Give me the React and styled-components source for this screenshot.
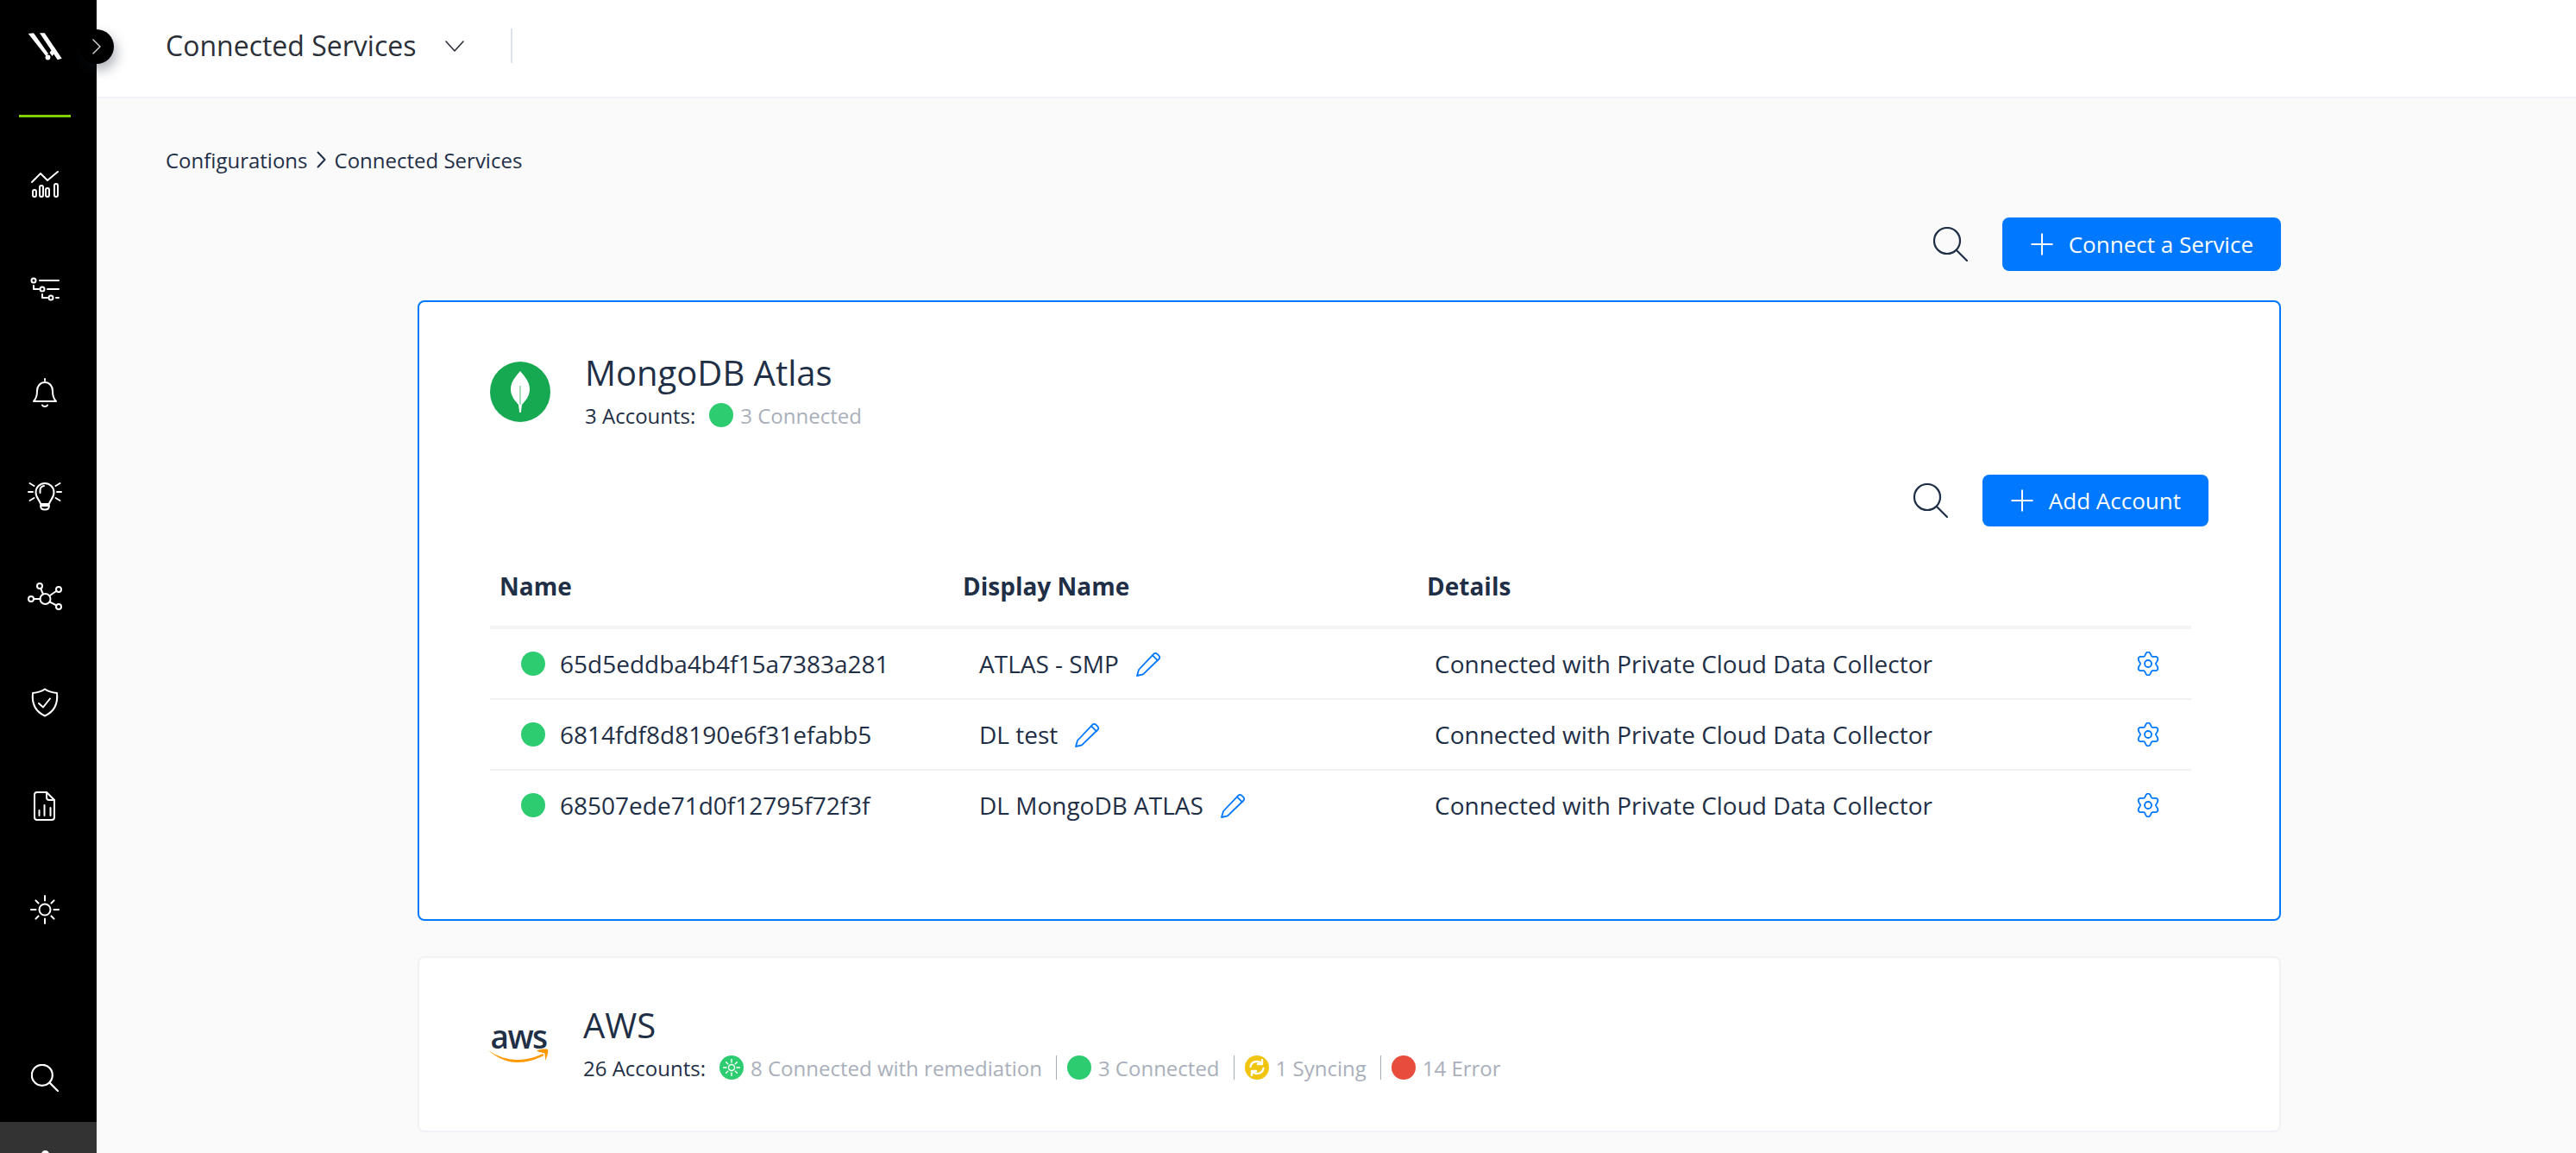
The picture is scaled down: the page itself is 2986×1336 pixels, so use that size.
import React from "react";
import styled, { createGlobalStyle } from "styled-components";

const INK = "#1f2f46";
const MUTED = "#a9afbb";
const BLUE = "#0078ff";

const Global = createGlobalStyle`
  html, body { margin: 0; padding: 0; height: 1336px; overflow: hidden; background: #fafafb; }
  * { box-sizing: border-box; }
  body { font-family: "Open Sans", "Liberation Sans", sans-serif; color: ${INK}; }
`;

const Page = styled.div`
  display: flex;
  width: 2986px;
  height: 1336px;
  overflow: hidden;
`;

const Sidebar = styled.aside`
  position: relative;
  flex: 0 0 112px;
  display: flex;
  flex-direction: column;
  background: #000;
  z-index: 2;
`;

const Brand = styled.div`
  height: 133px;
  padding: 36px 0 0 30px;
`;

const AccentRule = styled.div`
  width: 60px;
  height: 3px;
  margin-left: 22px;
  background: #7ed000;
  flex: none;
`;

const Toggle = styled.button`
  position: absolute;
  left: 92px;
  top: 34px;
  width: 40px;
  height: 40px;
  padding: 0;
  border: 0;
  border-radius: 50%;
  background: #000;
  box-shadow: 3px 7px 14px rgba(20, 30, 50, 0.35);
  display: flex;
  align-items: center;
  justify-content: center;
`;

const NavList = styled.nav`
  display: flex;
  flex-direction: column;
  padding-top: 18px;
`;

const NavItem = styled.div`
  height: 120px;
  padding-right: 8px;
  display: flex;
  align-items: center;
  justify-content: center;
`;

const SideSearch = styled.div`
  margin-top: auto;
  height: 102px;
  padding-right: 8px;
  display: flex;
  align-items: center;
  justify-content: center;
`;

const UserTab = styled.div`
  height: 36px;
  flex: none;
  background: #333;
  display: flex;
  justify-content: center;
  padding: 33px 8px 0 0;
  overflow: hidden;
`;

const UserHead = styled.span`
  width: 9px;
  height: 9px;
  border-radius: 50%;
  background: #fff;
`;

const Main = styled.div`
  flex: 1;
  min-width: 0;
  display: flex;
  flex-direction: column;
`;

const TopBar = styled.header`
  height: 114px;
  flex: none;
  display: flex;
  align-items: flex-start;
  padding: 33px 0 0 80px;
  background: #fff;
  border-bottom: 2px solid #f2f3f7;
`;

const PageTitle = styled.h1`
  margin: 0;
  font-size: 32px;
  line-height: 40px;
  font-weight: 400;
  color: #2a2f38;
`;

const TitleCaret = styled.span`
  display: flex;
  margin: 14px 0 0 34px;
`;

const TopDivider = styled.span`
  width: 2px;
  height: 40px;
  margin-left: 54px;
  background: #dde1e8;
`;

const Content = styled.main`
  flex: 1;
  min-height: 0;
  padding: 54px 342px 0 80px;
`;

const Breadcrumb = styled.div`
  display: flex;
  align-items: center;
  gap: 10px;
  height: 34px;
  font-size: 24px;
  color: ${INK};
`;

const Column = styled.div`
  margin-left: 292px;
`;

const Toolbar = styled.div`
  display: flex;
  justify-content: flex-end;
  align-items: center;
  gap: 40px;
  margin-top: ${(p) => p.$top || 0}px;
`;

const PrimaryButton = styled.button`
  display: flex;
  align-items: center;
  gap: 18px;
  height: ${(p) => p.$h}px;
  padding: 0 32px 0 33px;
  border: 0;
  border-radius: 8px;
  background: ${BLUE};
  color: #fff;
  font: 400 26px "Open Sans", sans-serif;
`;

const Card = styled.section`
  margin-top: ${(p) => p.$top}px;
  background: #fff;
  border: 2px solid ${(p) => (p.$active ? BLUE : "#f1f2f6")};
  border-radius: 8px;
  padding: ${(p) => (p.$active ? "55px 82px 92px 82px" : "51px 82px 0 80px")};
  height: ${(p) => (p.$active ? "auto" : "204px")};
`;

const ServiceHead = styled.div`
  display: flex;
  align-items: flex-start;
  gap: ${(p) => p.$gap}px;
`;

const MongoMark = styled.div`
  width: 70px;
  height: 70px;
  margin-top: 14px;
  border-radius: 50%;
  background: #17a951;
  display: flex;
  align-items: center;
  justify-content: center;
  flex: none;
`;

const AwsMark = styled.div`
  width: 70px;
  margin-top: 23px;
  display: flex;
  flex-direction: column;
  align-items: center;
  flex: none;
`;

const AwsWord = styled.span`
  font-size: 37px;
  line-height: 34px;
  height: 31px;
  font-weight: 600;
  color: ${INK};
  letter-spacing: -1.5px;
`;

const ServiceText = styled.div`
  display: flex;
  flex-direction: column;
`;

const ServiceName = styled.h2`
  margin: 0;
  font-size: 40px;
  line-height: 54px;
  font-weight: 400;
  color: ${INK};
`;

const Summary = styled.div`
  display: flex;
  align-items: center;
  height: 34px;
  margin-top: 5px;
  font-size: 24px;
  color: ${INK};
`;

const SummaryLabel = styled.span`
  margin-right: 16px;
`;

const Stat = styled.span`
  display: flex;
  align-items: center;
  gap: 8px;
  color: ${MUTED};
`;

const StatRule = styled.span`
  width: 1px;
  height: 28px;
  margin: 0 12px 0 16px;
  background: #a9afbb;
`;

const Dot = styled.span`
  width: 28px;
  height: 28px;
  border-radius: 50%;
  flex: none;
  background: ${(p) => p.$color};
  display: flex;
  align-items: center;
  justify-content: center;
`;

const Table = styled.div`
  margin: 51px 20px 0 0;
`;

const HeadRow = styled.div`
  display: grid;
  grid-template-columns: 537px 538px 1fr;
  padding-bottom: 28px;
  border-bottom: 4px solid #f3f4f6;
`;

const HeadCell = styled.div`
  padding-left: 11px;
  font-size: 28px;
  line-height: 36px;
  font-weight: 700;
  color: ${INK};
`;

const Row = styled.div`
  display: grid;
  grid-template-columns: 537px 538px 1fr 64px;
  align-items: center;
  height: ${(p) => (p.$last ? 80 : 82)}px;
  border-bottom: ${(p) => (p.$last ? "0" : "2px solid #f1f2f4")};
  font-size: 28px;
  color: ${INK};
`;

const NameCell = styled.div`
  display: flex;
  align-items: center;
  gap: 17px;
  padding-left: 36px;
`;

const DisplayCell = styled.div`
  display: flex;
  align-items: center;
  gap: 20px;
  padding-left: 30px;
`;

const DetailCell = styled.div`
  padding-left: 20px;
`;

const GearCell = styled.div`
  display: flex;
`;

const Glyph = styled.svg`
  display: block;
  flex: none;
  fill: none;
  stroke: ${(p) => p.$c || "#fff"};
  stroke-width: ${(p) => p.$w || 2};
  stroke-linecap: round;
  stroke-linejoin: round;
`;

function SearchIcon({ size = 40, color = INK }) {
  return (
    <Glyph width={size} height={size} viewBox="0 0 40 40" $c={color} $w={2.2 * (40 / size)}>
      <circle cx="16" cy="16" r="15" />
      <path d="M27 27l12 12" />
    </Glyph>
  );
}

function PlusIcon() {
  return (
    <Glyph width="26" height="26" viewBox="0 0 26 26" $w={2}>
      <path d="M13 0.5v25M0.5 13h25" strokeLinecap="butt" />
    </Glyph>
  );
}

function PencilIcon() {
  return (
    <Glyph width="29" height="29" viewBox="0 0 29 29" $c={BLUE} $w={1.8}>
      <path d="M1 28l2-7L20.5 2.6a2.6 2.6 0 0 1 3.7 0l2.3 2.2a2.6 2.6 0 0 1 0 3.7L8 26.4z" />
      <path d="M19 4.4l6 6" />
    </Glyph>
  );
}

function gearPath() {
  const pts = [];
  for (let i = 0; i < 120; i++) {
    const t = (i / 120) * Math.PI * 2;
    const r = 11.6 + 2 * Math.cos(6 * t);
    const x = 14 + r * Math.sin(t) * 0.94;
    const y = 14 - r * Math.cos(t);
    pts.push(`${x.toFixed(2)} ${y.toFixed(2)}`);
  }
  return `M${pts.join("L")}Z`;
}

function GearIcon() {
  return (
    <Glyph width="28" height="28" viewBox="0 0 28 28" $c={BLUE} $w={1.8}>
      <path d={gearPath()} />
      <circle cx="14" cy="14" r="4" />
    </Glyph>
  );
}

function SunRays({ c, r0, r1 }) {
  const d = [0, 45, 90, 135, 180, 225, 270, 315]
    .map((a) => {
      const t = (a * Math.PI) / 180;
      const ro = a % 90 === 0 ? r1 : r1 - 1;
      return `M${(c + r0 * Math.cos(t)).toFixed(2)} ${(c + r0 * Math.sin(t)).toFixed(2)}L${(c + ro * Math.cos(t)).toFixed(2)} ${(c + ro * Math.sin(t)).toFixed(2)}`;
    })
    .join("");
  return <path d={d} />;
}

const icons = {
  chart: (
    <>
      <path d="M5 17l10-10 8 8L35 5" />
      <rect x="6" y="26" width="4" height="8" rx="2" />
      <rect x="14" y="21" width="4" height="13" rx="2" />
      <rect x="21" y="24" width="4" height="10" rx="2" />
      <rect x="31" y="19" width="4" height="15" rx="2" />
    </>
  ),
  list: (
    <>
      <circle cx="7" cy="11" r="2.5" />
      <path d="M14 11h22M7 17v4h6" />
      <circle cx="17" cy="21" r="2.5" />
      <path d="M23 21h13M17 27v4h6" />
      <circle cx="27" cy="31" r="2.5" />
      <path d="M33 31h3" />
    </>
  ),
  bell: (
    <>
      <path d="M20 5v2M7 31c3-3 4-6 4-12 0-6 4-10 9-10s9 4 9 10c0 6 1 9 4 12z" />
      <path d="M17 35.500c1 2 5 2 6 0" />
    </>
  ),
  bulb: (
    <>
      <path d="M15 30c-0.4-4-5.500-6.500-5.500-13.500a10.500 10.500 0 0 1 21 0C30.500 23.500 25.400 26 25 30z" />
      <path d="M14.500 17v-3c0-2.500 2-4.500 4.500-5" />
      <path d="M15 32h10c0 3-2 4.500-5 4.500s-5-1.500-5-4.500z" />
      <path d="M1 16h5M34 16h5M2.500 6l5 3M37.500 6l-5 3M2.500 26l5-3M37.500 26l-5-3" />
    </>
  ),
  network: (
    <>
      <circle cx="20.500" cy="20" r="6" />
      <circle cx="14" cy="5" r="3" />
      <circle cx="36" cy="9" r="3" />
      <circle cx="4" cy="20" r="3" />
      <circle cx="36" cy="29" r="3" />
      <path d="M15.200 8l2.800 6.500M33.500 10.800l-8 5.500M7 20h7.500M33.500 27.500l-8-4.200" />
    </>
  ),
  shield: (
    <>
      <path d="M20 4.500c4 3 9 4 14 4.500 1 9 0 20-14 26.500C6 29 5 18 6 9c5-.5 10-1.500 14-4.500z" />
      <path d="M13 21l5 4.500 8-10" />
    </>
  ),
  report: (
    <>
      <path d="M11 4h11l9 9v20a3 3 0 0 1-3 3H11a3 3 0 0 1-3-3V7a3 3 0 0 1 3-3z" />
      <path d="M22 4v6a3 3 0 0 0 3 3h6M13.500 25v6M19.500 19v12M26.500 22v9" />
    </>
  ),
  sun: (
    <>
      <circle cx="20" cy="20" r="6.500" />
      <SunRays c={20} r0={10.500} r1={16} />
    </>
  ),
};

function NavIcon({ name }) {
  return (
    <Glyph width="40" height="40" viewBox="0 0 40 40" $w={2}>
      {icons[name]}
    </Glyph>
  );
}

function BrandMark() {
  return (
    <svg width="44" height="36" viewBox="0 0 44 36" fill="#fff">
      <path d="M2.700 3L9 2.300 26 26.300 23.300 29z" />
      <path d="M16 2.300h5.700L41.700 31.700 36.700 33.300z" />
      <circle cx="25.500" cy="30.500" r="2.900" />
      <path d="M27.500 25L32.500 18.500 35.500 23 30.500 29z" />
    </svg>
  );
}

function LeafIcon() {
  return (
    <svg width="22" height="48" viewBox="0 0 22 48">
      <path d="M11 0c5 6 11 12 11 21 0 9-6 14-9 18l-1.200 9h-1.600L9 39c-3-4-9-9-9-18C0 12 6 6 11 0z" fill="#fff" />
      <path d="M11 17v22" stroke="#a7dcbb" strokeWidth="2" fill="none" />
    </svg>
  );
}

function AwsSmile() {
  return (
    <svg width="70" height="16" viewBox="0 0 70 16">
      <path d="M0 2c10 7 22 11 34 11 11 0 21-3 29-7l1.500 2C55 13 44 16 34 16 21 16 9 10 0 2z" fill="#f90" />
      <path d="M56 2c4-1 10-2 13-1 1 3-1 9-3 13 0-4 0-7-1-9-2 0-6 0-9-3z" fill="#f90" />
    </svg>
  );
}

function RemediationGlyph() {
  return (
    <Glyph width="20" height="20" viewBox="0 0 40 40" $w={2.8}>
      <circle cx="20" cy="20" r="7" />
      <SunRays c={20} r0={12} r1={19} />
    </Glyph>
  );
}

function SyncGlyph() {
  return (
    <Glyph width="20" height="20" viewBox="0 0 20 20" $w={2.4}>
      <path d="M2.500 9c.8-4 4-6 7.500-6 2 0 3.500.700 5 2" />
      <path d="M16 1v5h-5" />
      <path d="M17.500 11c-.8 4-4 6-7.500 6-2 0-3.500-.700-5-2" />
      <path d="M4 19v-5h5" />
    </Glyph>
  );
}

const rows = [
  { id: "65d5eddba4b4f15a7383a281", label: "ATLAS - SMP" },
  { id: "6814fdf8d8190e6f31efabb5", label: "DL test" },
  { id: "68507ede71d0f12795f72f3f", label: "DL MongoDB ATLAS" },
];

const navNames = ["chart", "list", "bell", "bulb", "network", "shield", "report", "sun"];

export default function App() {
  return (
    <Page>
      <Global />
      <Sidebar>
        <Brand>
          <BrandMark />
        </Brand>
        <AccentRule />
        <Toggle>
          <Glyph width="10" height="18" viewBox="0 0 10 18" $c="#d8d8d8" $w={1.4}>
            <path d="M1 1l8 8-8 8" />
          </Glyph>
        </Toggle>
        <NavList>
          {navNames.map((n) => (
            <NavItem key={n}>
              <NavIcon name={n} />
            </NavItem>
          ))}
        </NavList>
        <SideSearch>
          <SearchIcon size={32} color="#fff" />
        </SideSearch>
        <UserTab>
          <UserHead />
        </UserTab>
      </Sidebar>
      <Main>
        <TopBar>
          <PageTitle>Connected Services</PageTitle>
          <TitleCaret>
            <Glyph width="22" height="13" viewBox="0 0 22 13" $c="#2a2f38" $w={1.6}>
              <path d="M1 1l10 11L21 1" />
            </Glyph>
          </TitleCaret>
          <TopDivider />
        </TopBar>
        <Content>
          <Breadcrumb>
            <span>Configurations</span>
            <Glyph width="11" height="20" viewBox="0 0 11 20" $c={INK} $w={2}>
              <path d="M1.500 1.500L9.500 10l-8 8.500" />
            </Glyph>
            <span>Connected Services</span>
          </Breadcrumb>
          <Column>
            <Toolbar $top={50}>
              <SearchIcon />
              <PrimaryButton $h={62}>
                <PlusIcon />
                Connect a Service
              </PrimaryButton>
            </Toolbar>
            <Card $active $top={34}>
              <ServiceHead $gap={40}>
                <MongoMark>
                  <LeafIcon />
                </MongoMark>
                <ServiceText>
                  <ServiceName>MongoDB Atlas</ServiceName>
                  <Summary>
                    <SummaryLabel>3 Accounts:</SummaryLabel>
                    <Stat>
                      <Dot $color="#2ecc71" />3 Connected
                    </Stat>
                  </Summary>
                </ServiceText>
              </ServiceHead>
              <Toolbar $top={52}>
                <SearchIcon />
                <PrimaryButton $h={60}>
                  <PlusIcon />
                  Add Account
                </PrimaryButton>
              </Toolbar>
              <Table>
                <HeadRow>
                  <HeadCell>Name</HeadCell>
                  <HeadCell>Display Name</HeadCell>
                  <HeadCell>Details</HeadCell>
                </HeadRow>
                {rows.map((r, i) => (
                  <Row key={r.id} $last={i === rows.length - 1}>
                    <NameCell>
                      <Dot $color="#2ecc71" />
                      {r.id}
                    </NameCell>
                    <DisplayCell>
                      {r.label}
                      <PencilIcon />
                    </DisplayCell>
                    <DetailCell>Connected with Private Cloud Data Collector</DetailCell>
                    <GearCell>
                      <GearIcon />
                    </GearCell>
                  </Row>
                ))}
              </Table>
            </Card>
            <Card $top={41}>
              <ServiceHead $gap={40}>
                <AwsMark>
                  <AwsWord>aws</AwsWord>
                  <AwsSmile />
                </AwsMark>
                <ServiceText>
                  <ServiceName>AWS</ServiceName>
                  <Summary>
                    <SummaryLabel>26 Accounts:</SummaryLabel>
                    <Stat>
                      <Dot $color="#2ecc71">
                        <RemediationGlyph />
                      </Dot>
                      8 Connected with remediation
                    </Stat>
                    <StatRule />
                    <Stat>
                      <Dot $color="#2ecc71" />3 Connected
                    </Stat>
                    <StatRule />
                    <Stat>
                      <Dot $color="#f1c40f">
                        <SyncGlyph />
                      </Dot>
                      1 Syncing
                    </Stat>
                    <StatRule />
                    <Stat>
                      <Dot $color="#e74c3c" />14 Error
                    </Stat>
                  </Summary>
                </ServiceText>
              </ServiceHead>
            </Card>
          </Column>
        </Content>
      </Main>
    </Page>
  );
}
